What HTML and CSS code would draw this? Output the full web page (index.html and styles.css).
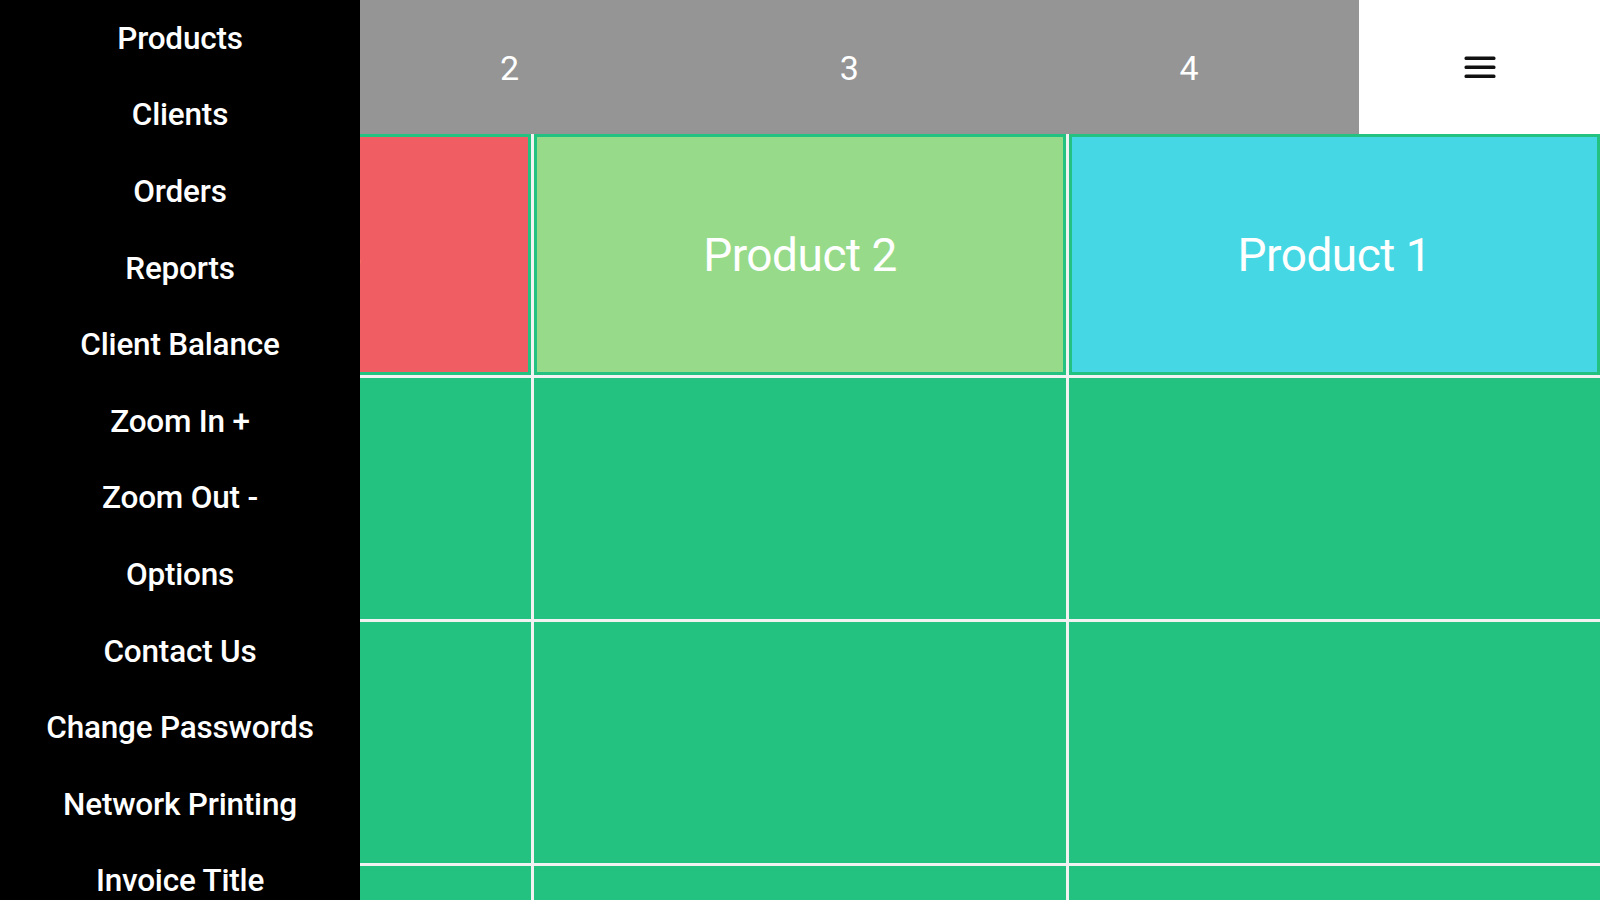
FILE: index.html
```html
<!DOCTYPE html>
<html lang="en">
<head>
<meta charset="utf-8">
<title>POS</title>
<link rel="stylesheet" href="styles.css">
</head>
<body>
<div class="page">
  <header class="topbar">
    <nav class="tabs">
      <div class="tab">1</div>
      <div class="tab">2</div>
      <div class="tab">3</div>
      <div class="tab">4</div>
    </nav>
    <button class="menu-btn" aria-label="Menu">
      <svg width="32" height="24" viewBox="0 0 32 24">
        <rect x="0.5" y="1.5" width="31" height="3.4" rx="1.5" fill="#111"/>
        <rect x="0.5" y="10.5" width="31" height="3.4" rx="1.5" fill="#111"/>
        <rect x="0.5" y="19.5" width="31" height="3.4" rx="1.5" fill="#111"/>
      </svg>
    </button>
  </header>
  <main class="grid">
    <div class="cell"><div class="product red">Product 3</div></div>
    <div class="cell"><div class="product lime">Product 2</div></div>
    <div class="cell"><div class="product cyan">Product 1</div></div>
    <div class="cell"></div>
    <div class="cell"></div>
    <div class="cell"></div>
    <div class="cell"></div>
    <div class="cell"></div>
    <div class="cell"></div>
    <div class="cell"></div>
    <div class="cell"></div>
    <div class="cell"></div>
  </main>
</div>
<aside class="sidebar">
  <ul class="side-menu">
    <li>Products</li>
    <li>Clients</li>
    <li>Orders</li>
    <li>Reports</li>
    <li>Client Balance</li>
    <li>Zoom In +</li>
    <li>Zoom Out -</li>
    <li>Options</li>
    <li>Contact Us</li>
    <li>Change Passwords</li>
    <li>Network Printing</li>
    <li>Invoice Title</li>
  </ul>
</aside>
</body>
</html>
```
FILE: styles.css
```css
* { box-sizing: border-box; }

html, body {
  margin: 0;
  padding: 0;
  width: 1600px;
  height: 900px;
  overflow: hidden;
  background: #ffffff;
  font-family: Roboto, "Noto Sans", Arial, sans-serif;
}

.page {
  display: flex;
  flex-direction: column;
  width: 1600px;
}

.topbar {
  display: flex;
  height: 134px;
}

.tabs {
  flex: 1;
  display: grid;
  grid-template-columns: repeat(4, 1fr);
  background: #959595;
}

.tab {
  display: flex;
  align-items: center;
  justify-content: center;
  color: #ffffff;
  font-size: 34px;
  font-weight: 400;
  padding-top: 2px;
}

.menu-btn {
  width: 241px;
  border: 0;
  padding: 0;
  background: #ffffff;
  display: flex;
  align-items: center;
  justify-content: center;
}

.menu-btn svg { display: block; }

.grid {
  display: grid;
  grid-template-columns: repeat(3, 1fr);
  grid-auto-rows: 241px;
  gap: 3px;
  background: #f2f2f2;
}

.cell {
  background: #24c281;
  padding: 3px;
  display: flex;
}

.product {
  flex: 1;
  display: flex;
  align-items: center;
  justify-content: center;
  color: #ffffff;
  font-size: 46px;
  font-weight: 400;
  letter-spacing: -0.5px;
}

.red { background: #f05e63; }
.lime { background: #97db8a; }
.cyan { background: #45d8e4; }

.sidebar {
  position: fixed;
  top: 0;
  left: 0;
  width: 360px;
  height: 900px;
  background: #000000;
  overflow: hidden;
}

.side-menu {
  list-style: none;
  margin: 0;
  padding: 0;
}

.side-menu li {
  height: 76.6px;
  display: flex;
  align-items: center;
  justify-content: center;
  color: #ffffff;
  font-size: 31.5px;
  font-weight: 500;
  letter-spacing: -0.2px;
  white-space: nowrap;
}
```
